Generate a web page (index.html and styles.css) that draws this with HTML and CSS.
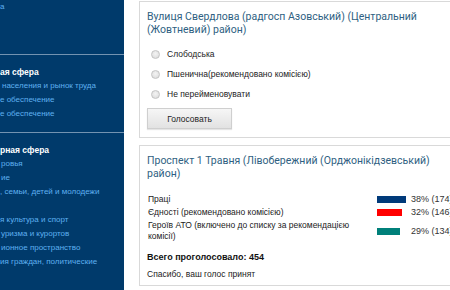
FILE: index.html
```html
<!DOCTYPE html>
<html>
<head>
<meta charset="utf-8">
<link rel="stylesheet" href="styles.css">
</head>
<body>
<div class="page">
  <nav class="sidebar">
    <ul class="menu menu-top">
      <li class="link">а</li>
    </ul>
    <ul class="menu">
      <li class="head">ая сфера</li>
      <li class="link ind2">населения и рынок труда</li>
      <li class="link">е обеспечение</li>
      <li class="link">е обеспечение</li>
    </ul>
    <ul class="menu">
      <li class="head">рная сфера</li>
      <li class="link ind1">ровья</li>
      <li class="link ind1">ие</li>
      <li class="link">, семьи, детей и молодежи</li>
      <li class="link blank">&nbsp;</li>
      <li class="link">я культура и спорт</li>
      <li class="link ind1">уризма и курортов</li>
      <li class="link ind1">ионное пространство</li>
      <li class="link">ия граждан, политические</li>
    </ul>
  </nav>
  <main class="content">
    <section class="panel poll">
      <h2 class="poll-title">Вулиця Свердлова (радгосп Азовський) (Центральний (Жовтневий) район)</h2>
      <div class="options">
        <label class="option"><span class="radio"></span>Слободська</label>
        <label class="option"><span class="radio"></span>Пшенична(рекомендовано комісією)</label>
        <label class="option"><span class="radio"></span>Не перейменовувати</label>
      </div>
      <button class="vote-btn">Голосовать</button>
    </section>
    <section class="panel results">
      <h2 class="poll-title">Проспект 1 Травня (Лівобережний (Орджонікідзевський) район)</h2>
      <div class="rows">
        <div class="row">
          <div class="row-label">Праці</div>
          <div class="row-bar"><span class="bar bar-blue" style="width:29px"></span></div>
          <div class="row-val">38% (174)</div>
        </div>
        <div class="row">
          <div class="row-label">Єдності (рекомендовано комісією)</div>
          <div class="row-bar"><span class="bar bar-red" style="width:25px"></span></div>
          <div class="row-val">32% (146)</div>
        </div>
        <div class="row">
          <div class="row-label">Героїв АТО (включено до списку за рекомендацією комісії)</div>
          <div class="row-bar"><span class="bar bar-teal" style="width:23px"></span></div>
          <div class="row-val">29% (134)</div>
        </div>
      </div>
      <div class="total">Всего проголосовало: 454</div>
      <div class="thanks">Спасибо, ваш голос принят</div>
    </section>
  </main>
</div>
</body>
</html>
```
FILE: styles.css
```css
html, body {
  margin: 0;
  padding: 0;
  background: #fff;
  overflow: hidden;
}
body {
  font-family: "Liberation Sans", Arial, sans-serif;
  width: 450px;
  height: 290px;
}
.page {
  display: flex;
  align-items: flex-start;
  height: 290px;
}
.sidebar {
  width: 124px;
  flex: none;
  height: 290px;
  background: #003a6b;
}
.menu {
  list-style: none;
  margin: 0;
  padding: 10px 0 11px;
  border-bottom: 1px solid #7393b1;
}
.menu:last-child {
  border-bottom: none;
}
.menu-top {
  padding: 0;
  height: 54px;
}
.menu li {
  font-size: 8px;
  line-height: 14px;
  white-space: nowrap;
}
.menu .head {
  color: #fff;
  font-weight: bold;
  font-size: 8.5px;
}
.menu .link {
  color: #5fb0f0;
}
.menu .ind1 { padding-left: 1px; }
.menu .ind2 { padding-left: 2px; }
.content {
  flex: none;
  width: 340px;
  margin-left: 15px;
  padding-top: 1px;
  display: flex;
  flex-direction: column;
  gap: 7px;
}
.panel {
  border: 1px solid #d9d9d9;
  padding: 8px 0 0 7px;
  box-sizing: border-box;
}
.poll {
  height: 137px;
}
.results {
  height: 141px;
}
.poll-title {
  margin: 0;
  font-family: Roboto, "Liberation Sans", sans-serif;
  font-weight: normal;
  font-size: 10.5px;
  line-height: 13px;
  color: #2f5f82;
  width: 290px;
}
.options {
  margin-top: 8px;
  display: flex;
  flex-direction: column;
}
.option {
  display: flex;
  align-items: center;
  height: 20px;
  font-size: 8.5px;
  color: #222;
  padding-left: 4px;
}
.radio {
  width: 9px;
  height: 9px;
  border-radius: 50%;
  border: 1px solid #c4c4c4;
  background: radial-gradient(circle at 50% 40%, #f4f4f4, #d8d8d8);
  box-sizing: border-box;
  margin-right: 7px;
}
.vote-btn {
  display: block;
  margin-top: 4px;
  width: 85px;
  height: 21px;
  border: 1px solid #cfcfcf;
  background: linear-gradient(#f6f6f6, #ececec 50%, #e2e2e2);
  font-family: "Liberation Sans", Arial, sans-serif;
  font-size: 8.5px;
  color: #222;
  padding: 0;
  box-shadow: 0 1px 1px rgba(0,0,0,0.1);
}
.rows {
  margin-top: 14px;
  display: flex;
  flex-direction: column;
  gap: 2px;
}
.row {
  display: flex;
  align-items: center;
}
.row-label {
  width: 230px;
  font-size: 8.5px;
  line-height: 11px;
  color: #222;
  padding-left: 1px;
  padding-right: 22px;
  box-sizing: border-box;
}
.row-bar {
  width: 34px;
  display: flex;
}
.bar {
  display: block;
  height: 7px;
}
.bar-blue { background: #003a7a; }
.bar-red { background: #ff0000; }
.bar-teal { background: #00807a; }
.row-val {
  font-size: 9px;
  line-height: 11px;
  color: #333;
  white-space: nowrap;
}
.total {
  margin-top: 10px;
  font-size: 9px;
  line-height: 11px;
  font-weight: bold;
  color: #111;
}
.thanks {
  margin-top: 6px;
  font-size: 8.5px;
  line-height: 11px;
  color: #222;
}
```
